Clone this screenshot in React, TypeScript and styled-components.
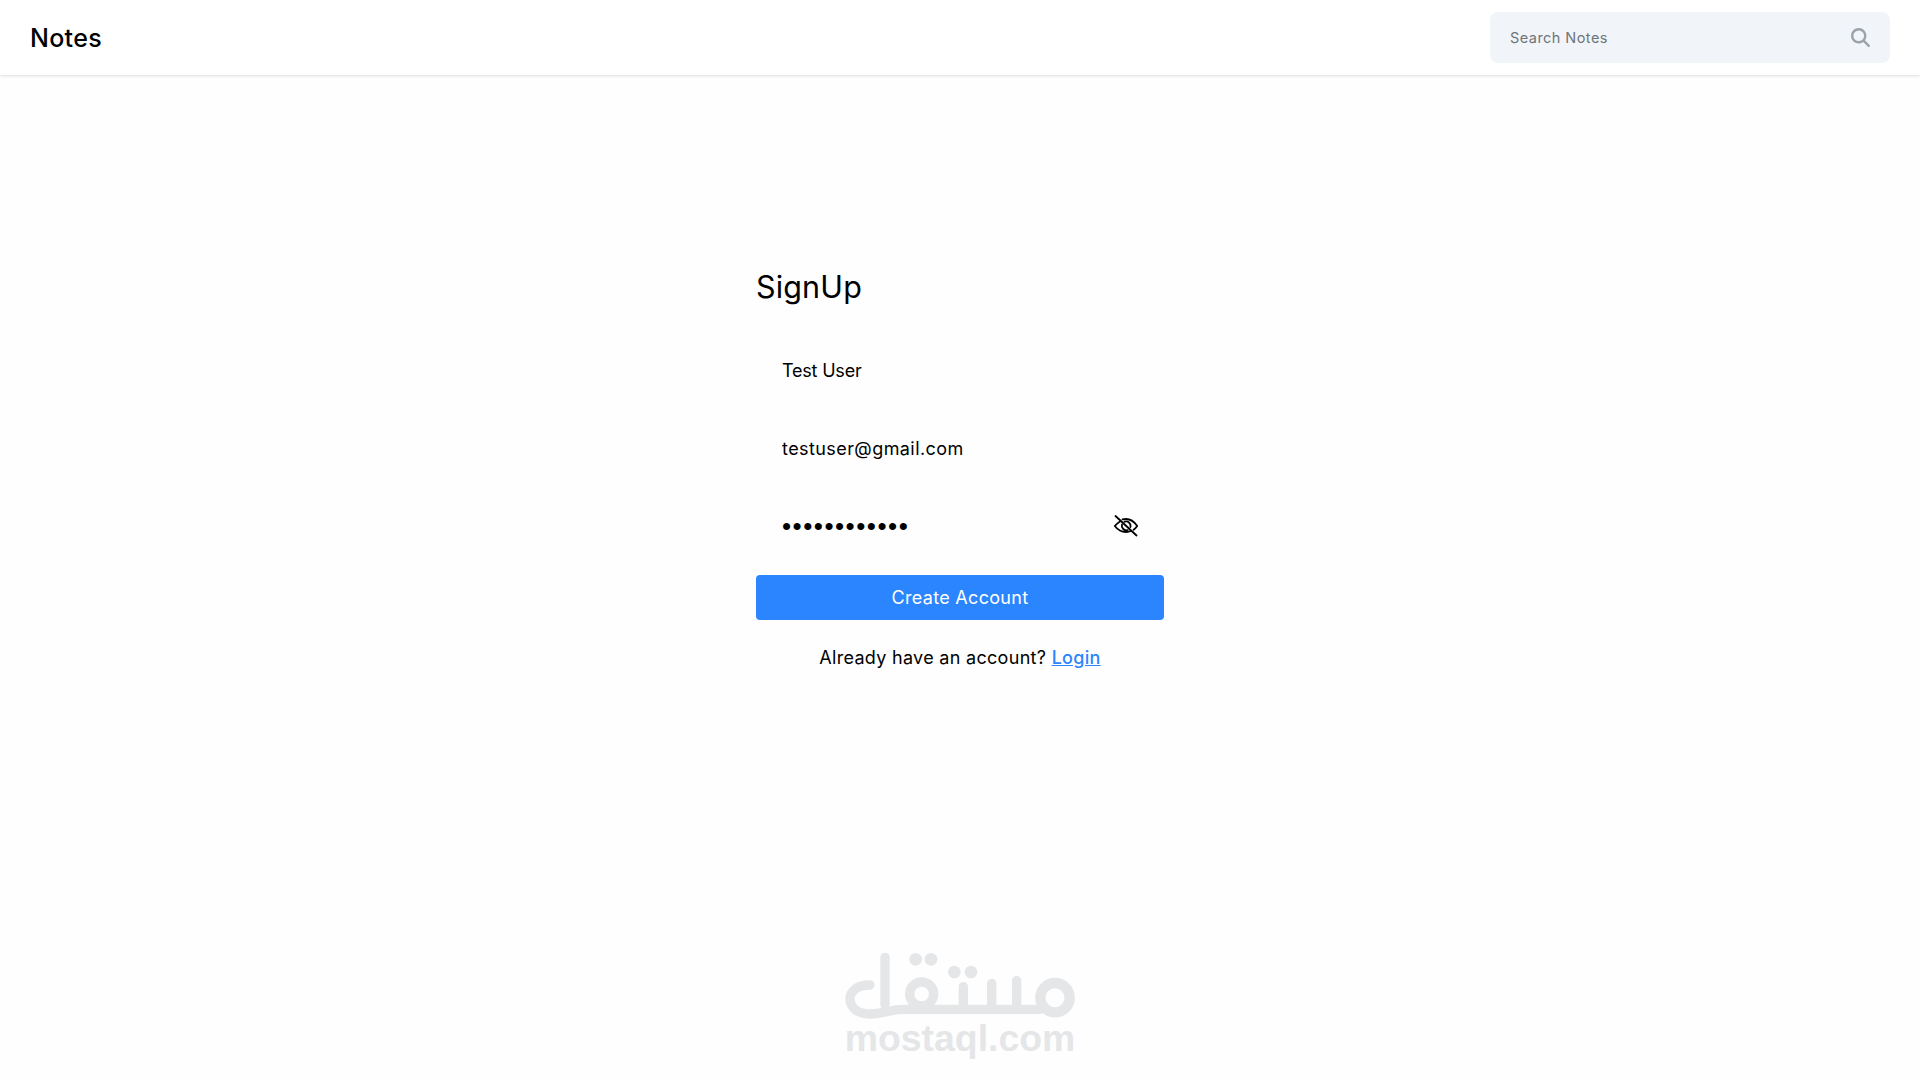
import React from "react";
import styled, { createGlobalStyle } from "styled-components";
import { FaMagnifyingGlass } from "react-icons/fa6";

const Global = createGlobalStyle`
  html, body { margin: 0; padding: 0; background: #fefefe; }
  body { font-family: Inter, "Noto Sans", sans-serif; color: #000; overflow: hidden; }
  * { box-sizing: border-box; }
`;

const Page = styled.div`
  position: relative;
  height: 1080px;
  overflow: hidden;
`;

const Header = styled.header`
  display: flex;
  align-items: center;
  justify-content: space-between;
  height: 75px;
  padding: 0 30px;
  background: #fff;
  box-shadow: 0 1px 3px rgba(15, 23, 42, 0.14);
`;

const Brand = styled.h2`
  margin: 0;
  font-size: 25px;
  line-height: 32px;
  font-weight: 500;
  letter-spacing: 0.3px;
`;

const Search = styled.div`
  display: flex;
  align-items: center;
  width: 400px;
  height: 51px;
  padding: 0 20px 0 18px;
  border-radius: 8px;
  background: #f1f5f9;
`;

const SearchInput = styled.input`
  flex: 1;
  min-width: 0;
  border: 0;
  outline: 0;
  background: transparent;
  font: 400 14.5px/20px Inter, sans-serif;
  letter-spacing: 0.45px;
  color: #000;
  &::placeholder { color: #6f7478; opacity: 1; }
`;

const SearchIcon = styled(FaMagnifyingGlass)`
  width: 19px;
  height: 19px;
  color: #9ca3a8;
`;

const Main = styled.main`
  display: flex;
  justify-content: center;
  padding-top: 194px;
`;

const Form = styled.form`
  width: 408px;
`;

const Title = styled.h4`
  margin: 0 0 37px;
  font-size: 30.5px;
  line-height: 36px;
  font-weight: 400;
  letter-spacing: 0.15px;
`;

const Field = styled.div`
  display: flex;
  align-items: center;
  height: 56px;
  margin-bottom: 22px;
  padding: 0 25px 0 26px;
`;

const Input = styled.input<{ $spacing: number }>`
  flex: 1;
  min-width: 0;
  padding: 1px 0 0;
  border: 0;
  outline: 0;
  background: transparent;
  font: 400 18px/24px Inter, sans-serif;
  letter-spacing: ${(p) => p.$spacing}px;
  color: #000;
`;

const PasswordInput = styled.input`
  flex: 1;
  min-width: 0;
  padding: 0;
  border: 0;
  outline: 0;
  background: transparent;
  font: 400 26px/24px "Liberation Sans", sans-serif;
  letter-spacing: 1.5px;
  color: #000;
`;

const Submit = styled.button`
  display: block;
  width: 100%;
  height: 45px;
  margin-top: -1px;
  padding: 1px 0 0;
  border: 0;
  border-radius: 4px;
  background: #2b85ff;
  color: #fff;
  font: 400 18px/24px Inter, sans-serif;
  letter-spacing: 0.3px;
`;

const Foot = styled.p`
  margin: 26px 0 0;
  text-align: center;
  font-size: 18px;
  line-height: 24px;
  letter-spacing: 0.3px;
`;

const LoginLink = styled.a`
  color: #2b85ff;
  font-weight: 500;
  text-decoration: underline;
`;

const Watermark = styled.div`
  position: absolute;
  left: 845px;
  top: 950px;
  width: 230px;
  display: flex;
  flex-direction: column;
  align-items: center;
  pointer-events: none;
`;

const WatermarkText = styled.span`
  margin-top: -6px;
  font: 700 37.4px/44px "Liberation Sans", Arial, sans-serif;
  color: #e5e6e8;
  white-space: nowrap;
`;

const EyeOff = () => (
  <svg width="26" height="22" viewBox="0 0 26 22" fill="none" stroke="#000" strokeWidth="1.8" strokeLinecap="round" strokeLinejoin="round">
    <path d="M2.5 1 23.5 20.5" />
    <path d="M7 6.5C4.6 7.8 3 9.6 1.8 11c2.6 3.4 6.4 6 11.2 6 1.8 0 3.4-.3 4.9-1" />
    <path d="M9.5 4.3C10.6 4.1 11.8 4 13 4c4.800 0 8.600 3.200 11.200 7-1 1.400-2.200 2.700-3.600 3.800" />
    <path d="M9 9.500a4.500 4.500 0 0 0 5.800 5.500" />
    <path d="M11.500 6.700a4.500 4.500 0 0 1 5.900 5.400" />
  </svg>
);

const LogoMark = () => (
  <svg width="230" height="72" viewBox="75 60 690 216" fill="none" stroke="#e5e6e8" strokeWidth="28" strokeLinecap="round">
    <path d="M195 82V225" />
    <path d="M150 165C110 165 90 185 90 205C90 235 115 252 150 252C190 252 210 238 250 238H660" />
    <circle cx="705" cy="203" r="44" strokeWidth="31" />
    <circle cx="305" cy="192" r="36" />
    <path d="M430 170V236M515 160V236M590 152V236" />
    <g fill="#e5e6e8" stroke="none">
      <circle cx="287" cy="88" r="19" />
      <circle cx="333" cy="88" r="19" />
      <circle cx="403" cy="126" r="19" />
      <circle cx="453" cy="126" r="19" />
    </g>
  </svg>
);

export default function App() {
  return (
    <Page>
      <Global />
      <Header>
        <Brand>Notes</Brand>
        <Search>
          <SearchInput placeholder="Search Notes" readOnly />
          <SearchIcon />
        </Search>
      </Header>
      <Main>
        <Form>
          <Title>SignUp</Title>
          <Field><Input $spacing={-0.2} defaultValue="Test User" readOnly /></Field>
          <Field><Input $spacing={0.42} defaultValue="testuser@gmail.com" readOnly /></Field>
          <Field><PasswordInput type="password" defaultValue="testuser1234" readOnly /><EyeOff /></Field>
          <Submit type="button">Create Account</Submit>
          <Foot>Already have an account? <LoginLink href="#">Login</LoginLink></Foot>
        </Form>
      </Main>
      <Watermark>
        <LogoMark />
        <WatermarkText>mostaql.com</WatermarkText>
      </Watermark>
    </Page>
  );
}
